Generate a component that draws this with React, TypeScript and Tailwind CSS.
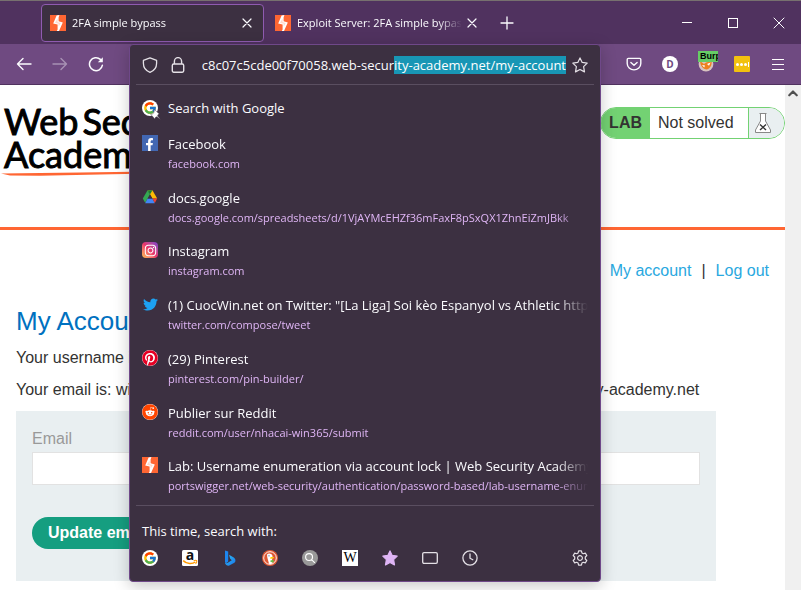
import { useLayoutEffect, useRef, type ReactNode } from "react";
import { FaFacebookF, FaTwitter, FaPinterest, FaReddit, FaInstagram } from "react-icons/fa";
import { FcGoogle } from "react-icons/fc";

function PortSwigger() {
  return (
    <svg viewBox="0 0 16 16" className="size-4 shrink-0" aria-hidden="true">
      <rect width="16" height="16" fill="#ff6633" />
      <path d="M9.4 0L6.6 0.6L3.2 8.4L7.6 9.6V14.4L6.8 16H9L12.8 7.4L8.6 6.2V2.4Z" fill="#fff" />
      <path d="M7.6 3.4V7L10.8 8L8.6 11.6V8.8L5 7.8Z" fill="#ff6633" opacity="0.25" />
    </svg>
  );
}

function GoogleMark({ pinned = false }: { pinned?: boolean }) {
  return (
    <span className="relative grid size-4 shrink-0 place-items-center rounded-full bg-white">
      <FcGoogle size={14} />
      {pinned && (
        <svg viewBox="0 0 10 10" className="absolute -right-[3px] -bottom-1 size-[11px]" aria-hidden="true">
          <path d="M4 0.5L8.5 4.6L7.2 5.2L6.9 6.4L9.6 9.6L6.2 7L5 7.6L4.4 9L0.6 4.8L2.4 4.6L3.6 3Z" fill="#fff" stroke="#3c3041" strokeWidth="0.4" />
        </svg>
      )}
    </span>
  );
}

function Facebook() {
  return (
    <span className="flex size-4 items-end justify-end bg-[#4267b2] pr-[2px] text-white">
      <FaFacebookF size={13} />
    </span>
  );
}

function Drive() {
  return (
    <svg viewBox="0 0 16 16" className="size-4" aria-hidden="true">
      <path d="M5.6 1.2H10.4L15.2 9.6H10.4Z" fill="#fbbc04" />
      <path d="M5.6 1.2L8 5.4L3.2 13.8L0.8 9.6Z" fill="#34a853" />
      <path d="M5.6 1.2H10.4L8 5.4Z" fill="#188038" />
      <path d="M5.6 9.6H10.4L12.8 14.2H3.2Z" fill="#4285f4" />
      <path d="M10.4 9.6H15.2L12.8 14Z" fill="#ea4335" />
      <path d="M8 5.4L10.4 9.6H5.6Z" fill="#3c3041" />
    </svg>
  );
}

function Instagram() {
  return (
    <span className="grid size-4 place-items-center rounded-[4px] bg-linear-to-tr from-[#fdbf4c] via-[#e8336b] to-[#7a3bd0] text-white">
      <FaInstagram size={13} />
    </span>
  );
}

function Disc({ children }: { children: ReactNode }) {
  return <span className="grid size-4 place-items-center rounded-full bg-white">{children}</span>;
}

function Amazon() {
  return (
    <svg viewBox="0 0 16 16" className="size-4" aria-hidden="true">
      <rect width="16" height="16" rx="1.5" fill="#fff" />
      <text x="8" y="9.6" textAnchor="middle" fontSize="14" fontWeight="700" fontFamily="Open Sans, sans-serif" fill="#111">a</text>
      <path d="M1.2 10.6C5 14.4 10.4 14.2 13.4 12" fill="none" stroke="#f90" strokeWidth="1.5" />
      <path d="M11.6 10.9C13 10.2 14.4 10.4 14.8 10.7C15 11.6 14.4 13 13.6 13.8" fill="none" stroke="#f90" strokeWidth="1.1" />
    </svg>
  );
}

function Bing() {
  return (
    <svg viewBox="0 0 16 16" className="size-4" aria-hidden="true">
      <defs>
        <linearGradient id="bing" x1="0" y1="0" x2="1" y2="1">
          <stop offset="0" stopColor="#2fc1f5" />
          <stop offset="1" stopColor="#1a74e8" />
        </linearGradient>
      </defs>
      <path d="M3 0.4L6.2 1.6V11.6L3.8 13.6L3 12Z" fill="#1d86ef" />
      <path d="M7 4.8L11.8 7.4C13.8 8.6 14 11.4 12.4 12.8L6.8 15.8C5 16 3.4 14.6 3 12.8C4 13.6 5 13.2 6.2 12.4L9.8 10.2L8.2 8.8Z" fill="url(#bing)" />
    </svg>
  );
}

function DuckDuckGo() {
  return (
    <svg viewBox="0 0 16 16" className="size-4" aria-hidden="true">
      <circle cx="8" cy="8" r="8" fill="#de5833" />
      <circle cx="8" cy="8" r="6.3" fill="none" stroke="#fff" strokeWidth="0.9" />
      <path d="M5 4.6C6.2 2.8 9.6 3.2 10.4 5.6C10.8 7.2 10.2 9 10 10.2L10.6 13.6C9.4 14.2 8 14.2 7 13.8C6.4 11 5 8 5 4.6Z" fill="#fff" />
      <circle cx="7" cy="5.8" r="0.6" fill="#2d4f8e" />
      <path d="M8.2 7.4C9.6 6.8 11.4 7 12.2 7.2C11.8 8.2 10 8.8 8.2 8.8Z" fill="#fdd20a" />
      <path d="M8.4 10.4L11.6 9.8V12.4L8.6 12Z" fill="#65bc46" />
    </svg>
  );
}

function Shield() {
  return (
    <svg viewBox="0 0 16 16" className="size-4 shrink-0" fill="none" stroke="currentColor" strokeWidth="1.3" strokeLinejoin="round" aria-hidden="true">
      <path d="M8 0.8L14.6 3.4V6.2C14.6 10.8 12 13.8 8 15.3C4 13.8 1.4 10.8 1.4 6.2V3.4Z" />
    </svg>
  );
}

function Lock() {
  return (
    <svg viewBox="0 0 16 16" className="size-4 shrink-0" fill="none" stroke="currentColor" strokeWidth="1.4" aria-hidden="true">
      <rect x="2.3" y="7" width="11.4" height="8.2" rx="1.4" />
      <path d="M4.4 7V4.2A3.6 3.6 0 0 1 11.6 4.2V7" />
    </svg>
  );
}

const starPath = "M8 0.9L10.2 5.4L15.2 6.1L11.6 9.6L12.5 14.9L8 12.5L3.5 14.9L4.4 9.6L0.8 6.1L5.8 5.4Z";

function Star({ filled = false }: { filled?: boolean }) {
  return (
    <svg viewBox="0 0 16 16" className="size-4 shrink-0" fill={filled ? "#dfb5f5" : "none"} stroke={filled ? "#dfb5f5" : "currentColor"} strokeWidth="1.2" strokeLinejoin="round" aria-hidden="true">
      <path d={starPath} />
    </svg>
  );
}

function Line({ d, className = "size-4", width = 1.3 }: { d: string; className?: string; width?: number }) {
  return (
    <svg viewBox="0 0 16 16" className={className} fill="none" stroke="currentColor" strokeWidth={width} strokeLinecap="round" strokeLinejoin="round" aria-hidden="true">
      <path d={d} />
    </svg>
  );
}

function Tab({ title, active = false }: { title: string; active?: boolean }) {
  return (
    <div
      role="tab"
      aria-selected={active}
      className={
        active
          ? "flex h-[38px] w-[223px] items-center gap-[6px] rounded-[4px] border border-[#8f5bb0] bg-[#3c3041] px-2"
          : "flex h-[38px] w-[223px] items-center gap-[6px] border border-transparent px-2"
      }
    >
      <PortSwigger />
      <span className="min-w-0 flex-1 overflow-hidden text-[11px] leading-4 whitespace-nowrap [mask-image:linear-gradient(to_right,black_calc(100%-24px),transparent)]">
        {title}
      </span>
      <button type="button" aria-label={`Close ${title}`} className="-ml-1 grid size-4 shrink-0 place-items-center">
        <Line d="M4 4L12 12M12 4L4 12" width={1.2} />
      </button>
    </div>
  );
}

const results = [
  { icon: <Facebook />, title: "Facebook", url: "facebook.com" },
  { icon: <Drive />, title: "docs.google", url: "docs.google.com/spreadsheets/d/1VjAYMcEHZf36mFaxF8pSxQX1ZhnEiZmJBkk" },
  { icon: <Instagram />, title: "Instagram", url: "instagram.com" },
  { icon: <FaTwitter size={15} color="#1da1f2" />, title: '(1) CuocWin.net on Twitter: "[La Liga] Soi kèo Espanyol vs Athletic http', url: "twitter.com/compose/tweet" },
  { icon: <Disc><FaPinterest size={16} color="#e60023" /></Disc>, title: "(29) Pinterest", url: "pinterest.com/pin-builder/" },
  { icon: <Disc><FaReddit size={16} color="#ff4500" /></Disc>, title: "Publier sur Reddit", url: "reddit.com/user/nhacai-win365/submit" },
  { icon: <PortSwigger />, title: "Lab: Username enumeration via account lock | Web Security Academy", url: "portswigger.net/web-security/authentication/password-based/lab-username-enum" },
];

const engines = [
  { name: "Google", icon: <GoogleMark /> },
  { name: "Amazon", icon: <Amazon /> },
  { name: "Bing", icon: <Bing /> },
  { name: "DuckDuckGo", icon: <DuckDuckGo /> },
  {
    name: "Search",
    icon: (
      <span className="grid size-4 place-items-center rounded-full bg-[#999] text-white">
        <Line className="size-[10px]" d="M6.5 1A5.5 5.5 0 1 0 6.5 12A5.5 5.5 0 1 0 6.5 1M10.5 10.5L15.4 15.4" width={1.8} />
      </span>
    ),
  },
  { name: "Wikipedia", icon: <span className="grid size-4 place-items-center bg-white font-['Liberation_Serif',serif] text-[14px] leading-4 text-black">W</span> },
  { name: "Bookmarks", icon: <Star filled /> },
  { name: "Tabs", icon: <Line d="M2 2.6H14A1.3 1.3 0 0 1 15.3 3.9V12.1A1.3 1.3 0 0 1 14 13.4H2A1.3 1.3 0 0 1 0.7 12.1V3.9A1.3 1.3 0 0 1 2 2.6Z" /> },
  { name: "History", icon: <Line d="M8 0.9A7.1 7.1 0 1 0 8 15.1A7.1 7.1 0 1 0 8 0.9M8 4V8.3L10.8 9.8" /> },
];

const fade = "overflow-hidden whitespace-nowrap [mask-image:linear-gradient(to_right,black_calc(100%-32px),transparent)]";

function AddressPanel() {
  const input = useRef<HTMLInputElement>(null);
  useLayoutEffect(() => {
    const el = input.current;
    if (!el) return;
    el.focus();
    el.setSelectionRange(el.value.indexOf("ity-academy"), el.value.length);
    el.scrollLeft = el.scrollWidth;
  }, []);

  return (
    <div className="absolute inset-x-0 top-0 z-10 rounded-[4px] border border-[#6f4889] bg-[#3c3041] px-[6px] text-[#fbfbfe] shadow-[0_4px_16px_rgba(0,0,0,0.22)]">
      <div className="flex h-10 items-center gap-3 border-b border-[#5a4e60] px-[6px] text-[#e4e0e6]">
        <Shield />
        <Lock />
        <input
          ref={input}
          aria-label="Address"
          defaultValue="c8c07c5cde00f70058.web-security-academy.net/my-account"
          className="-ml-[2px] h-[18px] min-w-0 flex-1 bg-transparent text-right text-[13px] leading-[18px] text-[#fbfbfe] caret-transparent outline-none selection:bg-[#1896b5] selection:text-white"
        />
        <button type="button" aria-label="Bookmark this page" className="-ml-[6px]"><Star /></button>
      </div>
      <div className="flex h-[42px] items-center gap-[10px] px-[6px] pt-1">
        <GoogleMark pinned />
        <span className="text-[13px] leading-5">Search with Google</span>
      </div>
      <ul className="grid h-[376px] auto-rows-fr grid-cols-1">
        {results.map((r) => (
          <li key={r.title} className="flex min-w-0 gap-[10px] pt-2 pl-[6px]">
            <span className="grid size-4 shrink-0 place-items-center">{r.icon}</span>
            <span className="mr-[6px] min-w-0 flex-1">
              <span className={`block text-[13px] leading-[19px] ${fade}`}>{r.title}</span>
              <span className={`block text-[11px] leading-[19px] text-[#dfb5f5] ${fade}`}>{r.url}</span>
            </span>
          </li>
        ))}
      </ul>
      <div className="mt-[2px] border-t border-[#5a4e60] px-[6px] pt-[15px] pb-[15px]">
        <p className="text-[13px] leading-5">This time, search with:</p>
        <div className="mt-[9px] flex items-center gap-6">
          {engines.map((e) => (
            <button key={e.name} type="button" aria-label={e.name} className="grid size-4 place-items-center text-[#e4e0e6]">{e.icon}</button>
          ))}
          <button type="button" aria-label="Search settings" className="ml-auto size-4 text-[#e4e0e6]">
            <Line d="M6.6 0.9H9.4L9.9 2.9L11.3 3.7L13.3 3.1L14.8 5.5L13.3 7V9L14.8 10.5L13.3 12.9L11.3 12.3L9.9 13.1L9.4 15.1H6.6L6.1 13.1L4.7 12.3L2.7 12.9L1.2 10.5L2.7 9V7L1.2 5.5L2.7 3.1L4.7 3.7L6.1 2.9ZM8 5.6A2.4 2.4 0 1 0 8 10.4A2.4 2.4 0 1 0 8 5.6" width={1.2} />
          </button>
        </div>
      </div>
    </div>
  );
}

function ToolButton({ label, children }: { label: string; children: ReactNode }) {
  return (
    <button type="button" aria-label={label} className="grid size-9 shrink-0 place-items-center">{children}</button>
  );
}

export default function App() {
  return (
    <div className="flex min-h-screen flex-col overflow-hidden bg-white font-['Open_Sans','Noto_Sans',sans-serif]">
      <header className="text-[#fbfbfe]">
        <div className="flex h-11 items-center border-t border-[#77706f] bg-[#50325f] pl-[41px]">
          <div role="tablist" className="flex gap-[2px]">
            <Tab title="2FA simple bypass" active />
            <Tab title="Exploit Server: 2FA simple bypass" />
          </div>
          <ToolButton label="New tab"><Line d="M8 2V14M2 8H14" /></ToolButton>
          <div className="-mr-px ml-auto flex">
            <button type="button" aria-label="Minimise" className="grid h-10 w-[46px] place-items-center"><span className="h-px w-[10px] bg-white" /></button>
            <button type="button" aria-label="Maximise" className="grid h-10 w-[46px] place-items-center"><span className="size-[10px] border border-white" /></button>
            <button type="button" aria-label="Close" className="grid h-10 w-[46px] place-items-center"><Line d="M3 3L13 13M13 3L3 13" width={1} /></button>
          </div>
        </div>
        <div className="flex h-[41px] items-start border-b border-[#50325f] bg-[#6f4a81] pr-[5px] pl-[6px]">
          <div className="flex h-10 w-[123px] shrink-0 items-center">
            <ToolButton label="Back"><Line d="M15 8H1.5M7 2.5L1.5 8L7 13.5" width={1.4} /></ToolButton>
            <ToolButton label="Forward"><Line className="size-4 opacity-40" d="M1 8H14.5M9 2.5L14.5 8L9 13.5" width={1.4} /></ToolButton>
            <ToolButton label="Reload">
              <svg viewBox="0 0 16 16" className="size-4" fill="none" stroke="currentColor" strokeWidth="1.5" strokeLinecap="round" aria-hidden="true">
                <path d="M14.4 9.2A6.5 6.5 0 1 1 12.4 3.4" />
                <path d="M14.8 1.2V6.2H9.8Z" fill="currentColor" stroke="none" />
              </svg>
            </ToolButton>
          </div>
          <div className="relative min-w-0 flex-1"><AddressPanel /></div>
          <div className="flex h-10 w-[195px] shrink-0 items-center justify-end">
            <ToolButton label="Pocket"><Line d="M2.4 2.4H13.6A1.2 1.2 0 0 1 14.8 3.6V7.6A6.8 6.3 0 0 1 1.2 7.6V3.6A1.2 1.2 0 0 1 2.4 2.4ZM4.9 6.4L8 9.3L11.1 6.4" width={1.4} /></ToolButton>
            <ToolButton label="Extension D"><span className="grid size-4 place-items-center rounded-full bg-white text-[10px] leading-4 font-bold text-[#6f4a81]">D</span></ToolButton>
            <ToolButton label="Burp proxy">
              <span className="relative grid size-4 place-items-center">
                <svg viewBox="0 0 16 16" className="size-4" aria-hidden="true">
                  <circle cx="8" cy="8" r="7.4" fill="#d8c3c0" />
                  <path d="M2 5L6 8L8 6.4L13.6 5C14 9 12.6 12.4 8.8 13.4C5 13.2 2.4 10 2 5Z" fill="#ee8120" />
                  <path d="M4 9L7 9.6L6.2 11.6Z M9 8L12.6 6.6L11 9.8Z" fill="#fff" />
                </svg>
                <span className="absolute -top-[5px] left-0 h-[11px] w-5 overflow-hidden bg-[#66cc66] pl-[2px] font-['Liberation_Sans',sans-serif] text-[9px] leading-[11px] font-bold text-black">Burp</span>
              </span>
            </ToolButton>
            <ToolButton label="Password manager">
              <span className="flex size-4 items-center justify-center gap-px rounded-[1px] bg-[#f2c10f]">
                <span className="size-[3px] rounded-full bg-white" />
                <span className="size-[3px] rounded-full bg-white" />
                <span className="size-[3px] rounded-full bg-white" />
                <span className="h-[5px] w-px bg-white" />
              </span>
            </ToolButton>
            <ToolButton label="Menu">
              <span className="flex w-3 flex-col gap-1">
                <span className="h-px bg-white" /><span className="h-px bg-white" /><span className="h-px bg-white" />
              </span>
            </ToolButton>
          </div>
        </div>
      </header>

      <div className="flex flex-1 font-['Liberation_Sans',Arial,sans-serif] text-[16px] leading-6 text-[#333332]">
        <div className="min-w-0 flex-1">
          <div className="flex h-[145px] items-start justify-between border-b-[3px] border-[#ff6633] pt-[22px]">
            <div className="-mt-[2px] font-['Lato',sans-serif] text-[36px] leading-[33px] text-black [-webkit-text-stroke:1px_black]">
              <p className="flex gap-1 pl-1"><span>Web</span><span>Security</span></p>
              <p className="pl-1">Academy</p>
              <svg viewBox="0 0 150 6" className="h-[6px] w-[150px]" aria-hidden="true">
                <path d="M1 2.4L80 1.6L150 0.4V2.6L100 3.6L40 4.8L10 4.4Z" fill="#ff6633" />
              </svg>
            </div>
            <div className="flex h-8 overflow-hidden rounded-full border border-[#73d273] bg-white leading-[30px]">
              <span className="bg-[#73d273] px-2 font-bold">LAB</span>
              <span className="w-[98px] pl-2">Not solved</span>
              <span className="flex w-9 items-center border-l border-[#73d273] bg-[#e9eff1] pl-[5px]">
                <svg viewBox="0 0 18 22" className="h-[22px] w-[18px]" aria-hidden="true">
                  <path d="M5.5 1.5H12.5M6.5 1.5V9L1.5 18V20.5H16.5V18L11.5 9V1.5" fill="#fff" stroke="#888" strokeWidth="1" />
                  <path d="M6 12.5L12 18M12 12.5L6 18" stroke="#333" strokeWidth="1.4" />
                </svg>
              </span>
            </div>
          </div>
          <main className="px-4 pt-[29px]">
            <nav className="flex justify-end gap-[10px] text-[#29a8e0]">
              <a href="#account">My account</a>
              <span className="text-[#333332]">|</span>
              <a href="#logout">Log out</a>
            </nav>
            <h1 className="mt-[22px] text-[26px] leading-[33px] text-[#0071c0]">My Account</h1>
            <p className="mt-2">Your username is: wiener</p>
            <p className="mt-2 whitespace-nowrap">Your email is: wiener@exploit-ac0b1e8c9a5c0c1f8c07c5cde00f70058.web-security-academy.net</p>
            <form className="mt-[9px] w-full max-w-[700px] bg-[#e9eff1] px-4 pt-4 pb-8" onSubmit={(e) => e.preventDefault()}>
              <label htmlFor="email" className="block text-[#999]">Email</label>
              <input id="email" type="email" className="mt-px block h-[33px] w-full border border-[#e2e2e2] bg-white px-2 outline-none" />
              <button type="submit" className="mt-8 h-8 rounded-full bg-[#159e80] px-4 font-bold text-white">Update email</button>
            </form>
          </main>
        </div>
        <div className="flex w-4 shrink-0 justify-center bg-[#f0f0f0] pt-1">
          <Line className="size-[10px] text-[#505050]" d="M2 10L8 4L14 10" width={3.4} />
        </div>
      </div>
    </div>
  );
}
